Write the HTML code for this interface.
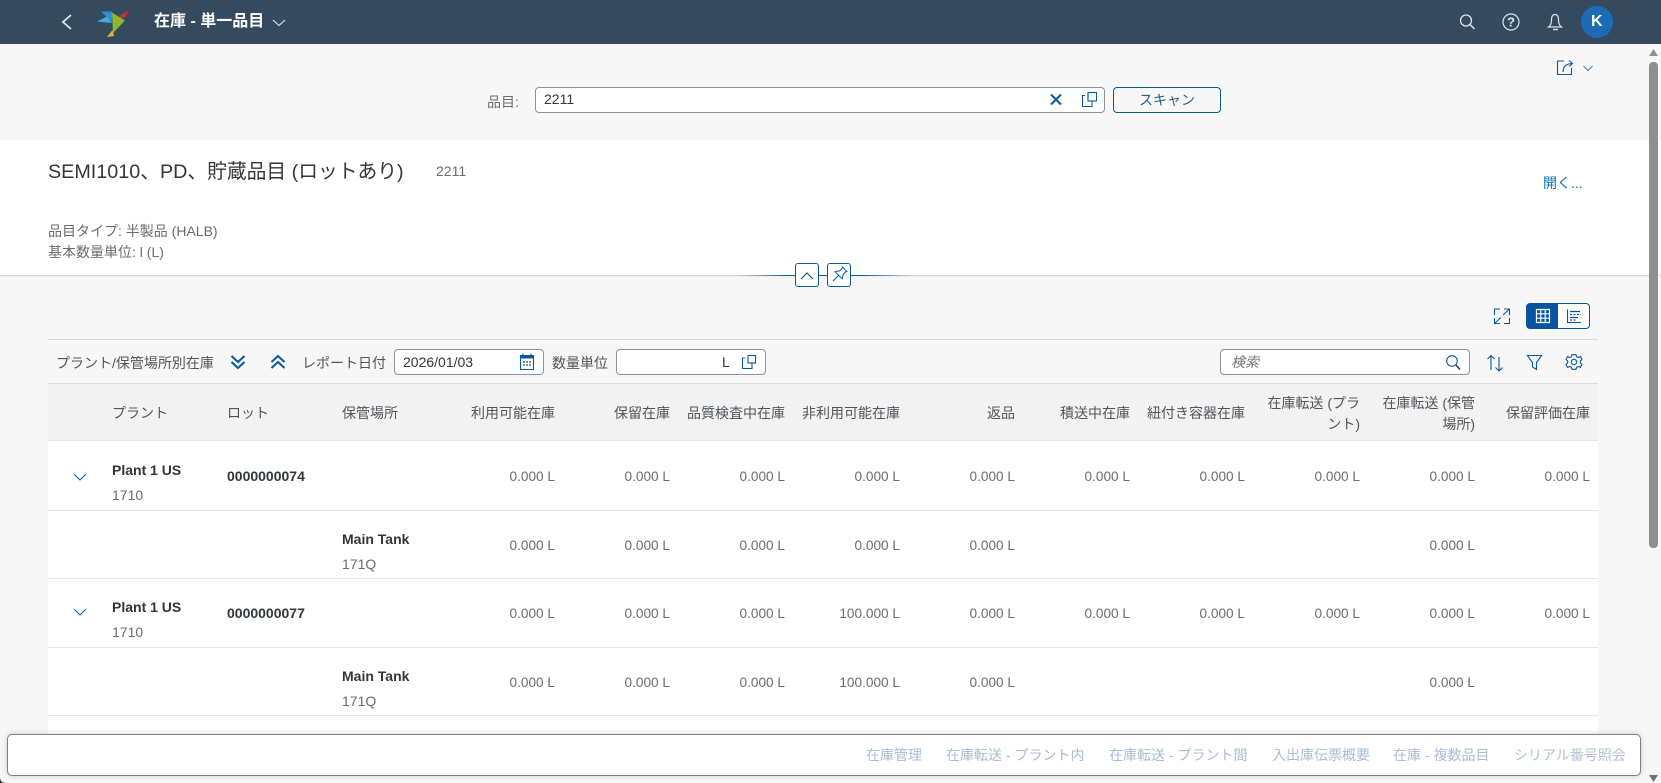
<!DOCTYPE html>
<html lang="ja">
<head>
<meta charset="utf-8">
<title>在庫 - 単一品目</title>
<style>
html,body{margin:0;padding:0;width:1661px;height:783px;overflow:hidden;background:#f7f7f7}
body{position:relative;font-family:"Liberation Sans","Noto Sans CJK JP",sans-serif;font-size:14px;color:#32363a}
.a{position:absolute;white-space:nowrap;line-height:20px}
.box{position:absolute;box-sizing:border-box;background:#fff;border:1px solid #89919a;border-radius:4px}
svg{position:absolute;overflow:visible;fill:none}
.ic{stroke:#0a5a9c;stroke-width:1.1}
.row{position:absolute;left:440px;width:1150px;display:flex;height:20px;line-height:20px;color:#6a6d70}
.row span{display:block;width:115px;text-align:right;white-space:nowrap}
.v{font-size:13.65px}
.hr{position:absolute;left:48px;width:1550px;height:1px;background:#e5e5e5}
.b{font-weight:bold;color:#32363a}
.g{color:#6a6d70}
.th{color:#515559}
.r{text-align:right}
.f{color:#a8bdd6}
</style>
</head>
<body>
<!-- shell header -->
<div style="position:absolute;left:0;top:0;width:1661px;height:44px;background:#354a5f"></div>
<svg style="left:0;top:0" width="1661" height="44">
<path d="M71 15 L63 22 L71 29" stroke="#d5e6f7" stroke-width="1.8"/>
<polygon points="101,11.5 112,11.5 112,22" fill="#2f8fd8"/>
<polygon points="97,21.5 107,16.5 112,23" fill="#4aa8e8"/>
<polygon points="112,12.5 125,20.5 113,33" fill="#8ab92d"/>
<polygon points="119,16 129.5,10 125,17 122,18.5" fill="#c9303a"/>
<polygon points="107,37 112.5,30 114,36" fill="#e8b32c"/>
<path d="M273 20 L279 25.5 L285 20" stroke="#d5e6f7" stroke-width="1.1"/>
<circle cx="1466" cy="20.5" r="5.5" stroke="#d5e6f7" stroke-width="1.3"/>
<path d="M1470 24.5 L1474.5 29" stroke="#d5e6f7" stroke-width="1.5"/>
<circle cx="1511" cy="22" r="8" stroke="#d5e6f7" stroke-width="1.2"/>
<text x="1511" y="26.5" text-anchor="middle" font-size="13" font-weight="bold" fill="#d5e6f7" font-family="Liberation Sans">?</text>
<path d="M1548.500 27 Q1551.500 25 1551.500 20 Q1551.500 14.500 1555 14.500 Q1558.500 14.500 1558.500 20 Q1558.500 25 1561.500 27 Z" stroke="#d5e6f7" stroke-width="1.2"/>
<path d="M1553 29.500 H1558" stroke="#d5e6f7" stroke-width="1.4"/>
<circle cx="1597" cy="22" r="16" fill="#1d6bb3"/>
</svg>
<div class="a" style="left:1591px;top:12px;color:#fff;font-weight:bold;font-size:16px">K</div>
<div class="a" style="left:154px;top:11px;color:#fff;font-weight:bold;font-size:16px;line-height:22px">在庫 - 単一品目</div>

<!-- share icon -->
<svg style="left:0;top:0" width="1661" height="140">
<path d="M1564 61 H1557.500 V74.500 H1571.500 V68" class="ic"/>
<path d="M1563 72 Q1563 64 1572 63.500 M1569 60.500 L1572.500 63.500 L1569 66.500" class="ic"/>
<path d="M1583.500 66 L1588 70.500 L1592.500 66" stroke="#0a5a9c" stroke-width=".8"/>
</svg>

<!-- search bar -->
<div class="a g" style="left:487px;top:92px;font-size:14px">品目:</div>
<div class="box" style="left:535px;top:87px;width:570px;height:26px"></div>
<div class="a" style="left:544px;top:89px">2211</div>
<svg style="left:0;top:0" width="1661" height="140">
<path d="M1051 94.500 L1061 104.500 M1061 94.500 L1051 104.500" stroke="#0a5a9c" stroke-width="2"/>
<path d="M1085 95.500 H1082.500 V106.500 H1092 V101" class="ic"/>
<rect x="1088" y="92.500" width="8.500" height="8.500" class="ic"/>
</svg>
<div style="position:absolute;box-sizing:border-box;left:1113px;top:87px;width:108px;height:26px;border:1px solid #0a5a8c;border-radius:4px;background:#f7f7f7;text-align:center;line-height:24px;color:#2b5f85">スキャン</div>

<!-- object header -->
<div style="position:absolute;left:0;top:140px;width:1661px;height:135px;background:#fff;box-shadow:0 1px 2px rgba(0,0,0,.1)"></div>
<div class="a" style="left:48px;top:160px;font-size:19.75px;line-height:24px;color:#32363a">SEMI1010、PD、貯蔵品目 (ロットあり)</div>
<div class="a g" style="left:436px;top:161px">2211</div>
<div class="a" style="left:1543px;top:173px;color:#0a6fb4">開く...</div>
<div class="a g" style="left:48px;top:221px">品目タイプ: 半製品 (HALB)</div>
<div class="a g" style="left:48px;top:242px">基本数量単位: l (L)</div>

<!-- divider -->
<div style="position:absolute;left:0;top:275px;width:1661px;height:1px;background:#d5d8da"></div>
<div style="position:absolute;left:735px;top:275px;width:180px;height:1px;background:linear-gradient(90deg,rgba(10,90,156,0),#0a5a9c 30%,#0a5a9c 70%,rgba(10,90,156,0))"></div>
<div style="position:absolute;box-sizing:border-box;left:795px;top:263px;width:24px;height:24px;border:1px solid #0a5a8c;border-radius:3px;background:#fff"></div>
<div style="position:absolute;box-sizing:border-box;left:827px;top:263px;width:24px;height:24px;border:1px solid #0a5a8c;border-radius:3px;background:#fff"></div>
<svg style="left:0;top:0" width="1661" height="300">
<path d="M801 279 L807 273 L813 279" stroke="#0a5a8c" stroke-width="1.2"/>
<g transform="rotate(45 839 275)" stroke="#0a5a9c" stroke-width="1">
<path d="M835 267 H843 M836.500 267 V271.500 L834 275.500 H844 L841.500 271.500 V267 M839 275.500 V283.500"/>
</g>
</svg>

<!-- table tools -->
<svg style="left:0;top:0" width="1661" height="400">
<path d="M1494.500 315 V309 H1500 M1504 309 H1509.500 V315 M1494.500 318 V323.500 H1500 M1504 323.500 H1509.500 V318" class="ic"/>
<path d="M1503 315 L1509 309.500 M1495 323 L1501 317.500" class="ic"/>
</svg>
<div style="position:absolute;box-sizing:border-box;left:1526px;top:303px;width:64px;height:26px;border:1px solid #0854a0;border-radius:4px;background:linear-gradient(90deg,#0854a0 50%,#fff 50%)"></div>
<svg style="left:0;top:0" width="1661" height="400">
<path d="M1536.500 309.500 H1549.500 V322.500 H1536.500 Z M1536.500 313.800 H1549.500 M1536.500 318.200 H1549.500 M1540.800 309.500 V322.500 M1545.200 309.500 V322.500" stroke="#fff" stroke-width="1.200"/>
<path d="M1567.500 309.500 V322.500 H1581" stroke="#0854a0" stroke-width="1.100"/>
<path d="M1570 311.500 H1580 M1570 317.500 H1578" stroke="#0854a0" stroke-width="1.200"/>
<path d="M1570 314.500 H1581 M1570 320 H1576" stroke="#0854a0" stroke-width="1.200" stroke-dasharray="2 1.500"/>
</svg>

<div style="position:absolute;left:48px;top:339px;width:1550px;height:1px;background:#d9d9d9"></div>
<div class="a th" style="left:56px;top:353px">プラント/保管場所別在庫</div>
<svg style="left:0;top:0" width="1661" height="400">
<path d="M231.500 356 L238 362 L244.500 356 M231.500 362 L238 368 L244.500 362" stroke="#0a5a9c" stroke-width="2.100"/>
<path d="M271.500 362 L278 356 L284.500 362 M271.500 368 L278 362 L284.500 368" stroke="#0a5a9c" stroke-width="2.100"/>
</svg>
<div class="a th" style="left:302px;top:353px">レポート日付</div>
<div class="box" style="left:394px;top:349px;width:150px;height:26px"></div>
<div class="a" style="left:403px;top:352px">2026/01/03</div>
<svg style="left:0;top:0" width="1661" height="400">
<path d="M520.500 357 H533.500 V369.500 H520.500 Z" class="ic"/>
<rect x="520" y="355" width="14" height="3.500" fill="#0a5a9c"/>
<path d="M523 355 V353.500 M531 355 V353.500" class="ic"/>
<path d="M523 362 H525 M526 362 H528 M529 362 H531 M523 365 H525 M526 365 H528 M529 365 H531" stroke="#0a5a9c" stroke-width="1.300"/>
</svg>
<div class="a th" style="left:552px;top:353px">数量単位</div>
<div class="box" style="left:616px;top:349px;width:150px;height:26px"></div>
<div class="a" style="left:722px;top:352px">L</div>
<svg style="left:0;top:0" width="1661" height="400">
<path d="M745 358 H742.500 V368.500 H752 V363" class="ic"/>
<rect x="748" y="355.500" width="7.500" height="7.500" class="ic"/>
</svg>
<div class="box" style="left:1220px;top:349px;width:250px;height:26px"></div>
<div class="a" style="left:1231px;top:352px;font-style:italic;color:#74777a">検索</div>
<svg style="left:0;top:0" width="1661" height="400">
<circle cx="1452" cy="361" r="5.300" stroke="#0a5a9c" stroke-width="1.100"/>
<path d="M1456 365 L1460 369.500" stroke="#32363a" stroke-width="1.400"/>
<path d="M1491 370 V355.500 M1487.500 359 L1491 355.500 L1494.500 359 M1499 357 V371 M1495.500 367.500 L1499 371 L1502.500 367.500" class="ic"/>
<path d="M1527.500 355.500 H1541.500 L1536.500 362.500 V369.500 L1532.500 367 V362.500 Z" class="ic"/>
<circle cx="1574" cy="362" r="2.700" class="ic"/>
<path d="M1572 354.700 H1576 L1576.600 356.700 L1578.600 357.500 L1580.400 356.500 L1582 359.500 L1580.400 361 V363 L1582 364.500 L1580.400 367.500 L1578.600 366.500 L1576.600 367.300 L1576 369.300 H1572 L1571.400 367.300 L1569.400 366.500 L1567.600 367.500 L1566 364.500 L1567.600 363 V361 L1566 359.500 L1567.600 356.500 L1569.400 357.500 L1571.400 356.700 Z" class="ic"/>
</svg>

<!-- table -->
<div style="position:absolute;left:48px;top:383px;width:1550px;height:1px;background:#dcdcdc"></div>
<div style="position:absolute;left:48px;top:384px;width:1550px;height:56px;background:#f2f2f2"></div>
<div style="position:absolute;left:48px;top:440px;width:1550px;height:294px;background:#fff"></div>
<div class="hr" style="top:440px"></div>
<div class="hr" style="top:510px"></div>
<div class="hr" style="top:578px"></div>
<div class="hr" style="top:647px"></div>
<div class="hr" style="top:715px"></div>

<div class="a th" style="left:112px;top:403px">プラント</div>
<div class="a th" style="left:227px;top:403px">ロット</div>
<div class="a th" style="left:342px;top:403px">保管場所</div>
<div class="row th" style="top:403px;color:#515559">
<span>利用可能在庫</span><span>保留在庫</span><span>品質検査中在庫</span><span>非利用可能在庫</span><span>返品</span><span>積送中在庫</span><span>紐付き容器在庫</span><span></span><span></span><span>保留評価在庫</span>
</div>
<div class="a th r" style="right:301px;top:393px;line-height:21px">在庫転送 (プラ<br>ント)</div>
<div class="a th r" style="right:186px;top:393px;line-height:21px">在庫転送 (保管<br>場所)</div>

<svg style="left:0;top:0" width="200" height="700">
<path d="M74 474 L80 480 L86 474" stroke="#0a5a9c" stroke-width="1"/>
<path d="M74 609 L80 615 L86 609" stroke="#0a5a9c" stroke-width="1"/>
</svg>

<div class="a b" style="left:112px;top:460px">Plant 1 US</div>
<div class="a g" style="left:112px;top:485px">1710</div>
<div class="a b" style="left:227px;top:466px">0000000074</div>
<div class="row v" style="top:467px"><span>0.000 L</span><span>0.000 L</span><span>0.000 L</span><span>0.000 L</span><span>0.000 L</span><span>0.000 L</span><span>0.000 L</span><span>0.000 L</span><span>0.000 L</span><span>0.000 L</span></div>

<div class="a b" style="left:342px;top:529px">Main Tank</div>
<div class="a g" style="left:342px;top:554px">171Q</div>
<div class="row v" style="top:536px"><span>0.000 L</span><span>0.000 L</span><span>0.000 L</span><span>0.000 L</span><span>0.000 L</span><span></span><span></span><span></span><span>0.000 L</span><span></span></div>

<div class="a b" style="left:112px;top:597px">Plant 1 US</div>
<div class="a g" style="left:112px;top:622px">1710</div>
<div class="a b" style="left:227px;top:603px">0000000077</div>
<div class="row v" style="top:604px"><span>0.000 L</span><span>0.000 L</span><span>0.000 L</span><span>100.000 L</span><span>0.000 L</span><span>0.000 L</span><span>0.000 L</span><span>0.000 L</span><span>0.000 L</span><span>0.000 L</span></div>

<div class="a b" style="left:342px;top:666px">Main Tank</div>
<div class="a g" style="left:342px;top:691px">171Q</div>
<div class="row v" style="top:673px"><span>0.000 L</span><span>0.000 L</span><span>0.000 L</span><span>100.000 L</span><span>0.000 L</span><span></span><span></span><span></span><span>0.000 L</span><span></span></div>

<!-- footer -->
<div style="position:absolute;box-sizing:border-box;left:7px;top:734px;width:1634px;height:42px;background:#fff;border:1px solid #7f7f7f;border-radius:5px;box-shadow:0 0 6px rgba(0,0,0,.18)"></div>
<div class="a f" style="left:866px;top:745px">在庫管理</div>
<div class="a f" style="left:946px;top:745px">在庫転送 - プラント内</div>
<div class="a f" style="left:1109px;top:745px">在庫転送 - プラント間</div>
<div class="a f" style="left:1272px;top:745px">入出庫伝票概要</div>
<div class="a f" style="left:1393px;top:745px">在庫 - 複数品目</div>
<div class="a f" style="left:1514px;top:745px;color:#b4c3d6">シリアル番号照会</div>

<!-- scrollbar -->
<div style="position:absolute;left:1649px;top:62px;width:9px;height:486px;background:#8f8f8f;border-radius:4px"></div>
<svg style="left:0;top:0" width="1661" height="783">
<polygon points="1649,56 1658,56 1653.500,49" fill="#8f8f8f"/>
<polygon points="1649,775 1658,775 1653.500,782" fill="#6f6f6f"/>
<path d="M0 777 V783 H6 Q0 783 0 777 Z" fill="#333"/>
</svg>
</body>
</html>
